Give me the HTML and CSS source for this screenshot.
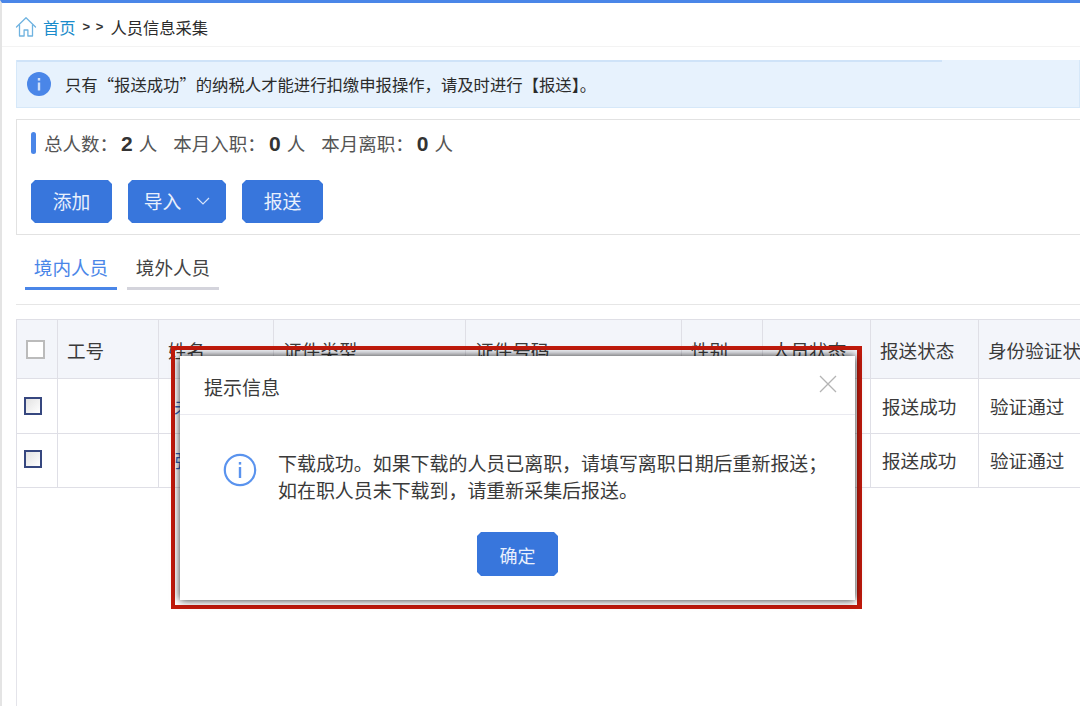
FILE: index.html
```html
<!DOCTYPE html>
<html lang="zh-CN">
<head>
<meta charset="utf-8">
<title>人员信息采集</title>
<link rel="stylesheet" href="styles.css">
</head>
<body>
<div class="page">
  <nav class="crumbs">
    <svg class="home" viewBox="0 0 22 22" width="22" height="22" fill="none" stroke="#6fb3e0" stroke-width="1.3" stroke-linejoin="round" stroke-linecap="round"><path d="M1.5 11 11 1.8 20.5 11"/><path d="M4.5 9v11h4.6v-6h3.8v6h4.6V9"/></svg>
    <a class="crumb-link">首页</a>
    <span class="crumb-sep">&gt; &gt;</span>
    <span class="crumb-now">人员信息采集</span>
  </nav>
  <main class="main">
    <div class="notice">
      <svg class="notice-icon" viewBox="0 0 24 24" width="24" height="24"><circle cx="12" cy="12" r="12" fill="#4a86e8"/><rect x="10.8" y="10.5" width="2.4" height="8" fill="#cfe0fa"/><rect x="10.8" y="6" width="2.4" height="2.6" fill="#cfe0fa"/></svg>
      <span>只有“报送成功”的纳税人才能进行扣缴申报操作，请及时进行【报送】。</span>
    </div>
    <section class="panel">
      <div class="stats">
        <i class="mark"></i>
        <span class="stat">总人数：<b>2</b> 人</span>
        <span class="stat">本月入职：<b>0</b> 人</span>
        <span class="stat">本月离职：<b>0</b> 人</span>
      </div>
      <div class="actions">
        <button class="btn">添加</button>
        <button class="btn btn-drop">导入
          <svg viewBox="0 0 14 8" width="14" height="8" fill="none" stroke="#d5e3fa" stroke-width="1.2"><path d="M1 1l6 6 6-6"/></svg>
        </button>
        <button class="btn">报送</button>
      </div>
    </section>
    <div class="tabs">
      <span class="tab tab-on">境内人员</span>
      <span class="tab">境外人员</span>
    </div>
    <div class="table-wrap">
      <table class="grid">
        <colgroup>
          <col class="c1"><col class="c2"><col class="c3"><col class="c4"><col class="c5"><col class="c6"><col class="c7"><col class="c8"><col class="c9">
        </colgroup>
        <thead>
          <tr>
            <th><i class="check check-head"></i></th>
            <th>工号</th><th>姓名</th><th>证件类型</th><th>证件号码</th><th>性别</th><th>人员状态</th><th>报送状态</th><th>身份验证状态</th>
          </tr>
        </thead>
        <tbody>
          <tr>
            <td><i class="check"></i></td><td></td><td class="name">未</td><td></td><td></td><td></td><td></td><td>报送成功</td><td>验证通过</td>
          </tr>
          <tr>
            <td><i class="check"></i></td><td></td><td class="name">张</td><td></td><td></td><td></td><td></td><td>报送成功</td><td>验证通过</td>
          </tr>
        </tbody>
      </table>
    </div>
  </main>
</div>
<div class="frame"></div>
<div class="dialog">
  <header class="dialog-head">
    <span>提示信息</span>
    <svg class="close" viewBox="0 0 18 18" width="18" height="18" stroke="#b4b4b4" stroke-width="1.3"><path d="M1 1l16 16M17 1 1 17"/></svg>
  </header>
  <div class="dialog-body">
    <svg class="dialog-icon" viewBox="0 0 34 34" width="34" height="34" fill="none"><circle cx="17" cy="17" r="15.2" stroke="#5a93ee" stroke-width="2.2"/><rect x="15.8" y="14" width="2.4" height="11" fill="#5a93ee"/><rect x="15.8" y="9" width="2.4" height="2.6" fill="#5a93ee"/></svg>
    <p class="dialog-text">下载成功。如果下载的人员已离职，请填写离职日期后重新报送；<br>如在职人员未下载到，请重新采集后报送。</p>
  </div>
  <div class="dialog-foot"><button class="btn">确定</button></div>
</div>
</body>
</html>
```
FILE: styles.css
```css
* { box-sizing: border-box; }
html, body { margin: 0; height: 706px; overflow: hidden; background: #fff; }
body {
  position: relative;
  width: 1080px;
  font-family: "Noto Sans CJK SC", "Liberation Sans", sans-serif;
  color: #333;
}
.page {
  height: 706px;
  width: 1080px;
  overflow: hidden;
  border-top: 3px solid #4a86e8;
  border-left: 2px solid #e4e4e4;
}
.crumbs {
  display: flex;
  align-items: center;
  height: 44px;
  padding: 4px 0 0 13px;
  border-bottom: 1px solid #f3f3f3;
  font-size: 16.3px;
}
.home { margin-right: 6px; }
.crumb-link { color: #1a8ccb; }
.crumb-sep { margin: 0 6px 0 7px; font-size: 13px; font-weight: 700; color: #333; font-family: "Liberation Sans", sans-serif; letter-spacing: 1px; }
.crumb-now { color: #2b2b2b; }
.main { padding: 13px 0 0 14px; width: 1300px; }
.notice {
  display: flex;
  align-items: center;
  height: 48px;
  padding: 1px 0 0 11px;
  gap: 14px;
  background: linear-gradient(#cfe3f8, #cfe3f8) 0 0 / 925px 2px no-repeat, #e7f2fd;
  border: 1px solid #d6e8f9;
  border-top: 0;
  font-size: 16.35px;
  color: #2b2b2b;
  width: 1064px;
  white-space: nowrap;
}
.notice-icon { margin-left: -1px; }
.panel {
  margin-top: 11px;
  height: 116px;
  border: 1px solid #e2e2e2;
  padding: 11px 14px 0;
  width: 1100px;
}
.stats {
  display: flex;
  align-items: center;
  height: 24px;
  font-size: 18.5px;
  color: #555;
  white-space: nowrap;
}
.mark { width: 5px; height: 22px; border-radius: 3px; background: #4a86e8; margin-right: 8px; }
.stat { margin-right: 16px; }
.stat b { font-size: 21px; color: #333; margin: 0 2px 0 3px; font-family: "Liberation Sans", sans-serif; }
.actions { display: flex; gap: 16px; margin-top: 25px; }
.btn {
  height: 43px;
  width: 81px;
  border: 0;
  padding: 0 0 2px;
  background: #3876dc;
  color: #e9f0fc;
  font-family: inherit;
  font-size: 18.8px;
  clip-path: polygon(4px 0, calc(100% - 4px) 0, 100% 4px, 100% calc(100% - 4px), calc(100% - 4px) 100%, 4px 100%, 0 calc(100% - 4px), 0 4px);
}
.btn-drop { width: 98px; display: flex; align-items: center; justify-content: center; gap: 15px; }
.tabs {
  display: flex;
  gap: 10px;
  height: 70px;
  padding: 15px 0 0 9px;
  width: 1064px;
  border-bottom: 1px solid #e6e6e6;
}
.tab {
  width: 92px;
  height: 40px;
  line-height: 34px;
  text-align: center;
  border-bottom: 3px solid #d4d4dc;
  font-size: 18.6px;
  color: #444;
}
.tab-on { color: #4a86e8; border-bottom-color: #4a86e8; }
.table-wrap { margin-top: 14px; height: 400px; box-shadow: inset 1px 0 0 #e4e4ea; width: 1300px; }
.grid { table-layout: fixed; border-collapse: collapse; width: 1163px; font-size: 18.6px; color: #3a3a3a; }
.c1 { width: 41px; }
.c2 { width: 101px; }
.c3 { width: 115px; }
.c4 { width: 192px; }
.c5 { width: 216px; }
.c6 { width: 81px; }
.c7 { width: 108px; }
.c8 { width: 108px; }
.c9 { width: 201px; }
.grid th, .grid td {
  border: 1px solid #dfdfe6;
  padding: 0 9px;
  text-align: left;
  white-space: nowrap;
  font-weight: 400;
}
.grid thead tr { height: 59px; }
.grid th { background: #f3f5fa; }
.grid tbody tr { height: 54.5px; }
.grid td { padding-left: 11px; }
.grid tbody tr + tr td { padding-bottom: 2px; }
.name { color: #2f5fb8; padding-left: 15px !important; }
.check {
  display: block;
  width: 18px;
  height: 18px;
  margin-left: -4px;
  border: 2px solid #36477f;
  background: linear-gradient(135deg, #e2e2e2, #fff);
}
.check-head { width: 19px; height: 19px; margin-left: 0; border-color: #bbb; background: #fff; }
.frame {
  position: absolute;
  left: 171px;
  top: 346px;
  width: 691px;
  height: 263px;
  border: 4px solid #c01a0c;
  border-right-width: 5px;
}
.dialog {
  position: absolute;
  left: 180px;
  top: 356px;
  width: 675px;
  height: 244px;
  background: #fff;
  box-shadow: 0 0 8px rgba(0, 0, 0, .85);
}
.dialog-head {
  display: flex;
  justify-content: space-between;
  align-items: center;
  height: 59px;
  padding: 2px 18px 0 24px;
  border-bottom: 1px solid #eaeaf0;
  font-size: 19px;
  color: #3a3a3a;
}
.close { margin-top: -5px; }
.dialog-body { display: flex; padding: 34px 0 0 43px; gap: 21px; }
.dialog-icon { margin-top: 4px; flex: none; }
.dialog-text { margin: 0; font-size: 18.95px; line-height: 27px; color: #3a3a3a; white-space: nowrap; }
.dialog-foot { display: flex; justify-content: center; margin-top: 29px; }
.dialog-foot .btn { height: 44px; font-size: 18px; padding: 2px 0 0; }
```
